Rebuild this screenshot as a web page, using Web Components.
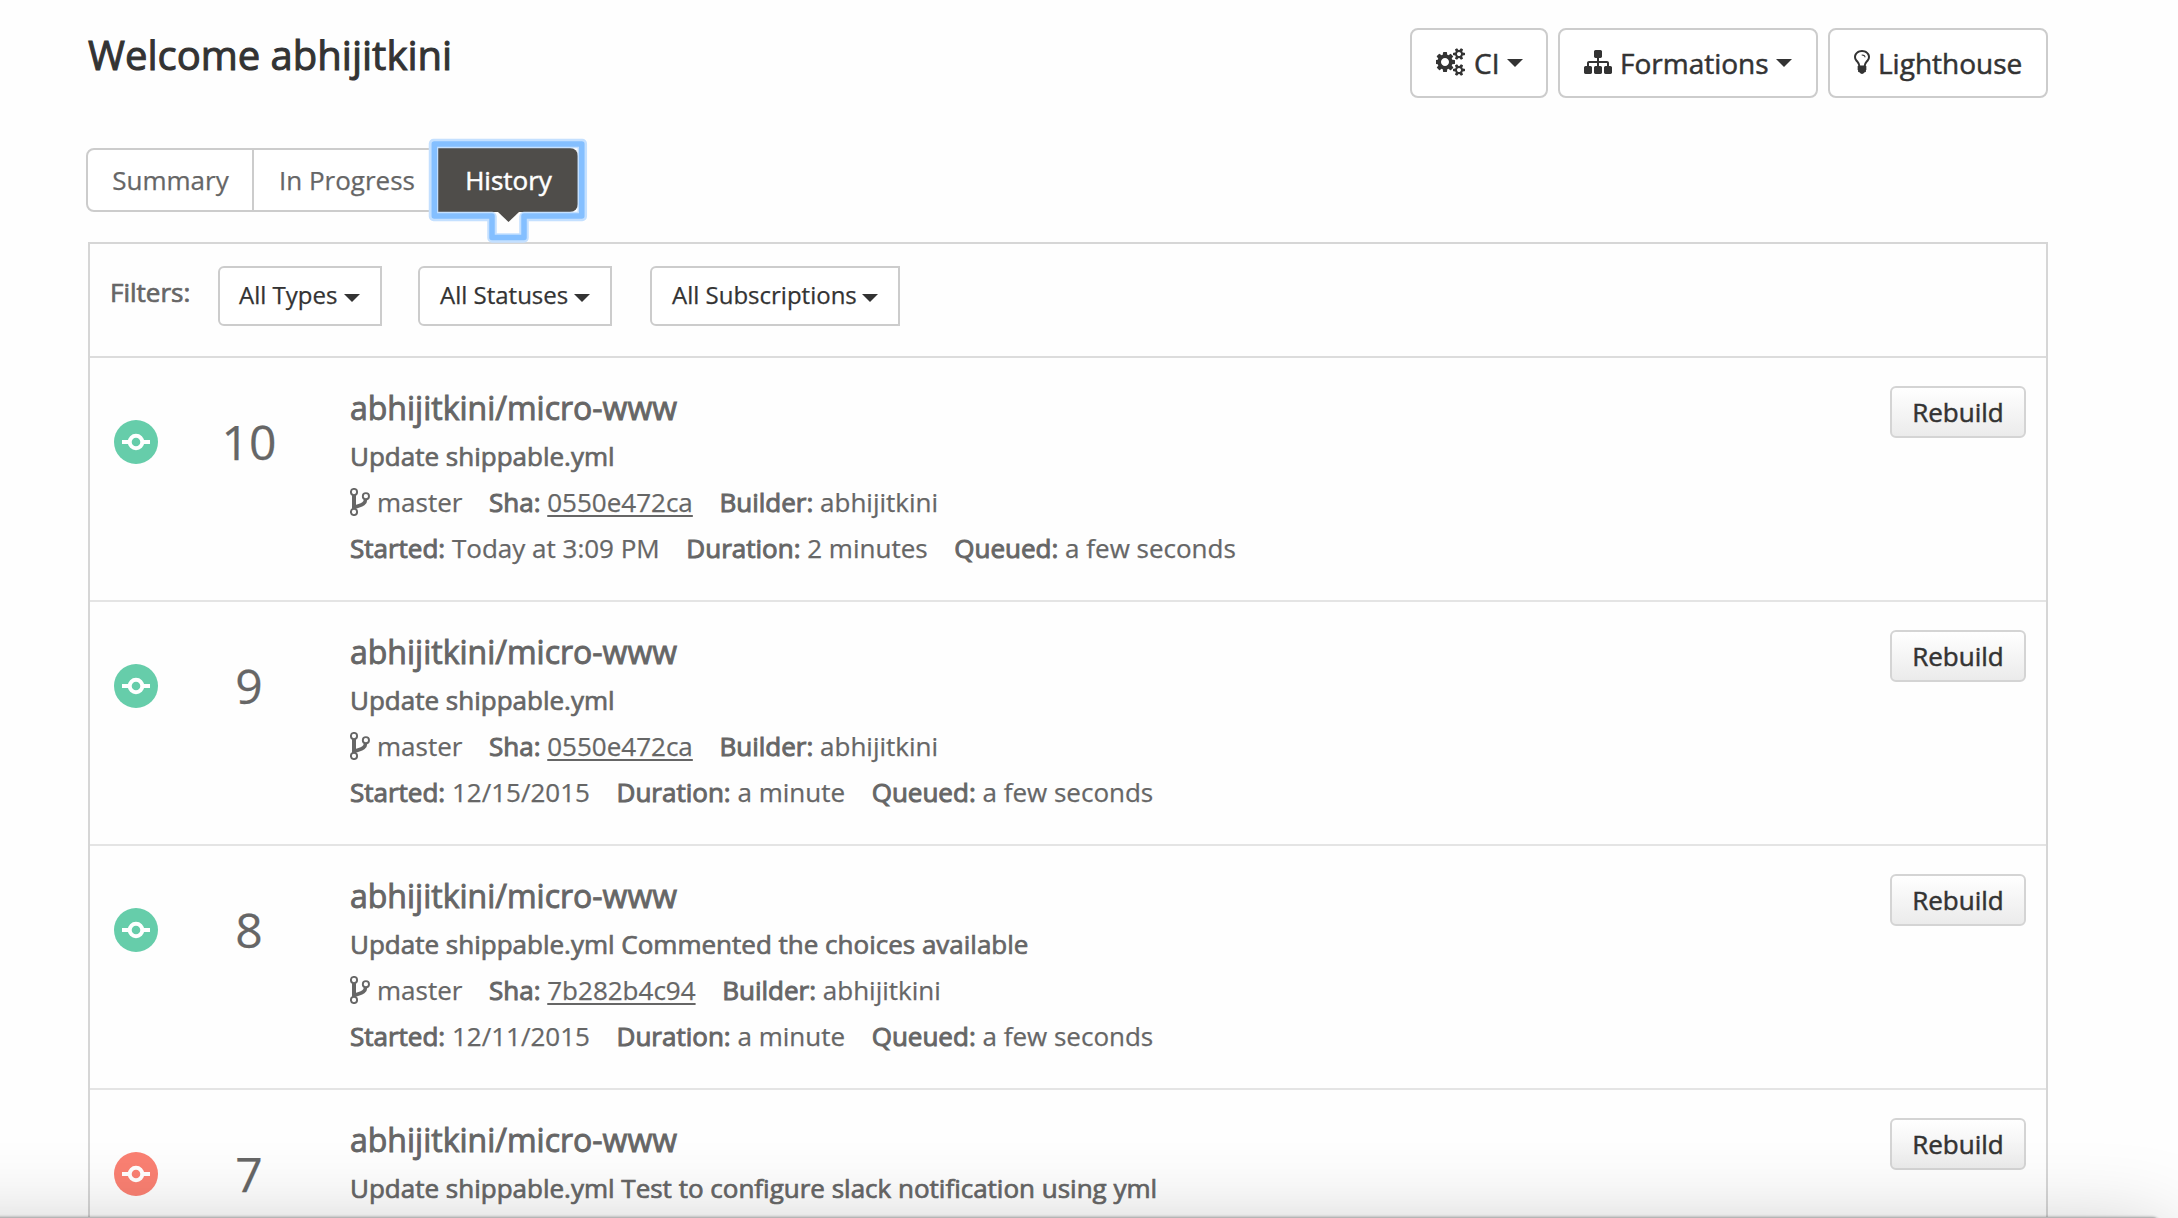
<!DOCTYPE html>
<html lang="en">
<head>
<meta charset="utf-8">
<title>Welcome abhijitkini</title>
<style>
html,body{margin:0;height:1218px;overflow:hidden;background:#fefefe}
body{font-family:"Open Sans","Noto Sans",sans-serif;color:#666;font-size:26px;-webkit-text-stroke:.25px currentColor}
</style>
</head>
<body>
<ci-dashboard></ci-dashboard>
<script>
const define = (name, render) => customElements.define(name, class extends HTMLElement {
  connectedCallback() {
    if (this.shadowRoot) return;
    this.attachShadow({ mode: 'open' }).innerHTML = render(this);
  }
});

const ICONS = {
  cogs: ['0 0 1920 1792', 30, 28, '<path d="M832 896q0-106-75-181t-181-75-181 75-75 181 75 181 181 75 181-75 75-181zm768 512q0-52-38-90t-90-38-90 38-38 90q0 53 37.5 90.5t90.5 37.5 90.5-37.5 37.5-90.5zm0-1024q0-52-38-90t-90-38-90 38-38 90q0 53 37.5 90.5t90.5 37.5 90.5-37.5 37.5-90.5zm-384 421v185q0 10-7 19.5t-16 10.5l-155 24q-11 35-32 76 34 48 90 115 7 11 7 20 0 12-7 19-23 30-82.5 89.5t-78.5 59.5q-11 0-21-7l-115-90q-37 19-77 31-11 108-23 155-7 24-30 24h-186q-11 0-20-7.5t-10-17.5l-23-153q-34-10-75-31l-118 89q-7 7-20 7-11 0-21-8-144-133-144-160 0-9 7-19 10-14 41-53t47-61q-23-44-35-82l-152-24q-10-1-17-9.5t-7-19.5v-185q0-10 7-19.5t16-10.5l155-24q11-35 32-76-34-48-90-115-7-11-7-20 0-12 7-20 22-30 82-89t79-59q11 0 21 7l115 90q34-18 77-32 11-108 23-154 7-24 30-24h186q11 0 20 7.5t10 17.5l23 153q34 10 75 31l118-89q8-7 20-7 11 0 21 8 144 133 144 160 0 8-7 19-12 16-42 54t-45 60q23 48 34 82l152 23q10 2 17 10.5t7 19.5zm640 533v140q0 16-149 31-12 27-30 52 51 113 51 138 0 4-4 7-122 71-124 71-8 0-46-47t-52-68q-20 2-30 2t-30-2q-14 21-52 68t-46 47q-2 0-124-71-4-3-4-7 0-25 51-138-18-25-30-52-149-15-149-31v-140q0-16 149-31 13-29 30-52-51-113-51-138 0-4 4-7 4-2 35-20t59-34 30-16q8 0 46 46.5t52 67.5q20-2 30-2t30 2q51-71 92-112l6-2q4 0 124 70 4 3 4 7 0 25-51 138 17 23 30 52 149 15 149 31zm0-1024v140q0 16-149 31-12 27-30 52 51 113 51 138 0 4-4 7-122 71-124 71-8 0-46-47t-52-68q-20 2-30 2t-30-2q-14 21-52 68t-46 47q-2 0-124-71-4-3-4-7 0-25 51-138-18-25-30-52-149-15-149-31v-140q0-16 149-31 13-29 30-52-51-113-51-138 0-4 4-7 4-2 35-20t59-34 30-16q8 0 46 46.5t52 67.5q20-2 30-2t30 2q51-71 92-112l6-2q4 0 124 70 4 3 4 7 0 25-51 138 17 23 30 52 149 15 149 31z"/>'],
  sitemap: ['0 0 1792 1792', 28, 28, '<path d="M1792 1248v320q0 40-28 68t-68 28h-320q-40 0-68-28t-28-68v-320q0-40 28-68t68-28h96v-192h-512v192h96q40 0 68 28t28 68v320q0 40-28 68t-68 28h-320q-40 0-68-28t-28-68v-320q0-40 28-68t68-28h96v-192h-512v192h96q40 0 68 28t28 68v320q0 40-28 68t-68 28h-320q-40 0-68-28t-28-68v-320q0-40 28-68t68-28h96v-192q0-52 38-90t90-38h512v-192h-96q-40 0-68-28t-28-68v-320q0-40 28-68t68-28h320q40 0 68 28t28 68v320q0 40-28 68t-68 28h-96v192h512q52 0 90 38t38 90v192h96q40 0 68 28t28 68z"/>'],
  bulb: ['384 0 1024 1792', 16, 28, '<path d="M1120 576q0 13-9.5 22.5t-22.5 9.5-22.5-9.5-9.5-22.5q0-46-54-71t-106-25q-13 0-22.5-9.5t-9.5-22.5 9.5-22.5 22.5-9.5q50 0 99.5 16t87 54 37.5 90zm160 0q0-72-34.5-134t-90-101.5-123-62-136.5-22.5-136.5 22.5-123 62-90 101.5-34.5 134q0 101 68 180 10 11 30.5 33t30.5 33q128 153 141 298h228q13-145 141-298 10-11 30.5-33t30.5-33q68-79 68-180zm128 0q0 155-103 268-45 49-74.5 87t-59.5 95.5-34 107.5q47 28 47 82 0 37-25 64 25 27 25 64 0 52-45 81 13 23 13 47 0 46-31.5 71t-77.5 25q-20 44-60 70t-87 26-87-26-60-70q-46 0-77.5-25t-31.5-71q0-24 13-47-45-29-45-81 0-37 25-64-25-27-25-64 0-54 47-82-4-50-34-107.5t-59.5-95.5-74.5-87q-103-113-103-268 0-99 44.5-184.5t117-142 164-89 186.5-32.5 186.5 32.5 164 89 117 142 44.5 184.5z"/>'],
  caret: ['0 0 16 8', 16, 8, '<path d="M0 0h16L8 8z"/>'],
  fork: ['0 0 20 28', 20, 28, '<g fill="none" stroke="currentColor"><circle cx="4" cy="4" r="3.1" stroke-width="1.9"/><circle cx="4" cy="24" r="3.1" stroke-width="1.9"/><circle cx="15.9" cy="8.2" r="3.1" stroke-width="1.9"/><path d="M4 7v14" stroke-width="4"/><path d="M15.6 11.2C15.4 17 10 17 4.500 19.300" stroke-width="3.600"/></g>'],
  commit: ['0 0 44 44', 44, 44, '<circle cx="22" cy="22" r="22"/><g fill="none" stroke="#fff" stroke-width="4"><path d="M8 22h7M29 22h7"/><circle cx="22" cy="22" r="6.300"/></g>'],
};

define('ui-icon', el => {
  const [box, w, h, body] = ICONS[el.getAttribute('name')];
  return `<style>:host{display:block;flex:none;width:${w}px;height:${h}px}svg{display:block}</style>
  <svg width="${w}" height="${h}" viewBox="${box}" fill="currentColor">${body}</svg>`;
});

define('nav-button', () => `<style>
:host{display:flex;align-items:center;box-sizing:border-box;height:70px;border:2px solid #ccc;border-radius:8px;
 padding:0 24px;background:#fff;color:#333;font-size:28px;line-height:66px;white-space:nowrap;-webkit-text-stroke:.5px #333}
</style><slot name="icon"></slot><slot></slot><slot name="caret"></slot>`);

define('tab-item', el => `<style>
:host{display:flex;justify-content:center;box-sizing:border-box;height:64px;border:2px solid #ccc;border-left-width:0;
 line-height:60px;white-space:nowrap;position:relative;background:#fff}
:host([first]){border-left-width:2px;border-radius:8px 0 0 8px}
:host([active]){background:#4f4d4a;border-color:#4f4d4a;color:#fff;border-radius:0 8px 8px 0;-webkit-text-stroke:.5px #fff}
.ring{position:absolute;left:-11px;top:-13px;z-index:2}
</style><slot></slot>${el.hasAttribute('active') ? `<svg class="ring" width="162" height="108" viewBox="427 137 162 108">
<path d="M498 212h21l-10.500 10z" fill="#4f4d4a"/>
<g fill="none" stroke-linejoin="round"><path d="M433.500 143.500H582.300V216.500H524V238H492V216.500H433.500z" stroke="#c4e0ff" stroke-width="9.500"/>
<path d="M434.300 144H581.800V216H524V237.500H492V216H434.300z" stroke="#84bfff" stroke-width="5.500"/></g></svg>` : ''}`);

define('filter-select', () => `<style>
:host{display:flex;align-items:center;justify-content:space-between;box-sizing:border-box;height:60px;border:2px solid #ccc;
 border-radius:6px 0 0 6px;padding:0 20px 0 19px;background:#fff;color:#333;font-size:24px;white-space:nowrap}
.t{line-height:54px;padding-bottom:2px}
ui-icon{margin-top:4px}
</style><span class="t"><slot></slot></span><ui-icon name="caret"></ui-icon>`);

define('meta-item', el => `<style>
:host{display:block;white-space:nowrap}
b{font-weight:400;-webkit-text-stroke:.95px #666}
</style><b>${el.getAttribute('label')}:</b> <slot></slot>`);

define('build-row', el => `<style>
:host{display:grid;grid-template-columns:92px 134px 1fr auto;box-sizing:border-box;height:244px;border-bottom:2px solid #e4e4e4;padding-right:20px;
 line-height:46px}
.dot{padding:61.500px 0 0 24px;color:${el.getAttribute('status') === 'failed' ? '#fa8072' : '#66cdaa'}}
.num{font-size:48px;line-height:60px;padding-top:54px;text-align:center}
.info{padding:27px 0 0 34px}
.title{font-size:32px;-webkit-text-stroke:.9px #666;margin-bottom:2px}
.msg{-webkit-text-stroke:.7px #666}
.line{display:flex;gap:26.600px}
.branch{display:flex;gap:7px}.branch ui-icon{margin-top:9px}
a{text-decoration:underline;text-underline-offset:3px;text-decoration-thickness:2px}
.go{margin-top:28px;box-sizing:border-box;width:136px;height:52px;border:2px solid #d4d4d4;border-radius:6px;text-align:center;
 line-height:48px;color:#333;background:linear-gradient(#fff,#ebebeb);-webkit-text-stroke:.5px #333}
</style>
<div class="dot"><ui-icon name="commit"></ui-icon></div>
<div class="num">${el.getAttribute('number')}</div>
<div class="info"><div class="title">abhijitkini/micro-www</div>
<div class="msg"><slot></slot></div>
${el.hasAttribute('sha') ? `<div class="line"><span class="branch"><ui-icon name="fork"></ui-icon>master</span><meta-item label="Sha"><a>${el.getAttribute('sha')}</a></meta-item><meta-item label="Builder">abhijitkini</meta-item></div>
<div class="line"><meta-item label="Started">${el.getAttribute('started')}</meta-item><meta-item label="Duration">${el.getAttribute('duration')}</meta-item><meta-item label="Queued">a few seconds</meta-item></div>` : ''}</div>
<div class="go">Rebuild</div>`);

define('window-shade', () => `<style>
:host{position:fixed;left:-100px;right:18px;top:1217px;height:300px;z-index:5;background:#b5b5b5;border-radius:8px;
 box-shadow:0 0 3px rgba(0,0,0,.35),0 30px 90px 10px rgba(0,0,0,.26)}
</style>`);

define('ci-dashboard', () => `<style>
:host{display:block;width:2178px;height:1218px;overflow:hidden}
header{display:flex;justify-content:space-between;align-items:flex-start;padding:28px 130px 0 88px}
h1{margin:0;font-weight:400;font-size:40px;line-height:54px;color:#333;-webkit-text-stroke:1px #333}
nav{display:flex;gap:10px}
.tabs{display:flex;padding:50px 0 0 86px}
.panel{margin:30px 130px 0 88px;border:2px solid #d6d6d6;border-bottom:0}
.filters{display:flex;align-items:flex-start;box-sizing:border-box;height:114px;border-bottom:2px solid #dcdcdc;padding:22px 0 0 20px}
.label{width:108px;line-height:52px;-webkit-text-stroke:.7px #666}
</style>
<header><h1>Welcome abhijitkini</h1>
<nav>
<nav-button style="width:138px"><ui-icon slot="icon" name="cogs" style="margin:-2px 8px 0 0"></ui-icon>CI<ui-icon slot="caret" name="caret" style="margin-left:8px"></ui-icon></nav-button>
<nav-button style="width:260px"><ui-icon slot="icon" name="sitemap" style="margin:-2px 8px 0 0"></ui-icon>Formations<ui-icon slot="caret" name="caret" style="margin-left:7px"></ui-icon></nav-button>
<nav-button style="width:220px"><ui-icon slot="icon" name="bulb" style="margin:-2px 8px 0 0"></ui-icon>Lighthouse</nav-button>
</nav></header>
<div class="tabs"><tab-item first style="width:168px;padding-left:1px">Summary</tab-item><tab-item style="width:184px;padding-left:4px">In Progress</tab-item><tab-item active style="width:140px;padding-left:3px">History</tab-item></div>
<div class="panel">
<div class="filters"><span class="label">Filters:</span>
<filter-select style="width:164px">All Types</filter-select>
<filter-select style="width:194px;margin-left:36px;padding-left:20px">All Statuses</filter-select>
<filter-select style="width:250px;margin-left:38px;padding-left:20px">All Subscriptions</filter-select></div>
<build-row number="10" sha="0550e472ca" started="Today at 3:09 PM" duration="2 minutes">Update shippable.yml</build-row>
<build-row number="9" sha="0550e472ca" started="12/15/2015" duration="a minute">Update shippable.yml</build-row>
<build-row number="8" sha="7b282b4c94" started="12/11/2015" duration="a minute">Update shippable.yml Commented the choices available</build-row>
<build-row number="7" status="failed">Update shippable.yml Test to configure slack notification using yml</build-row>
</div>
<window-shade></window-shade>`);
</script>
</body>
</html>
